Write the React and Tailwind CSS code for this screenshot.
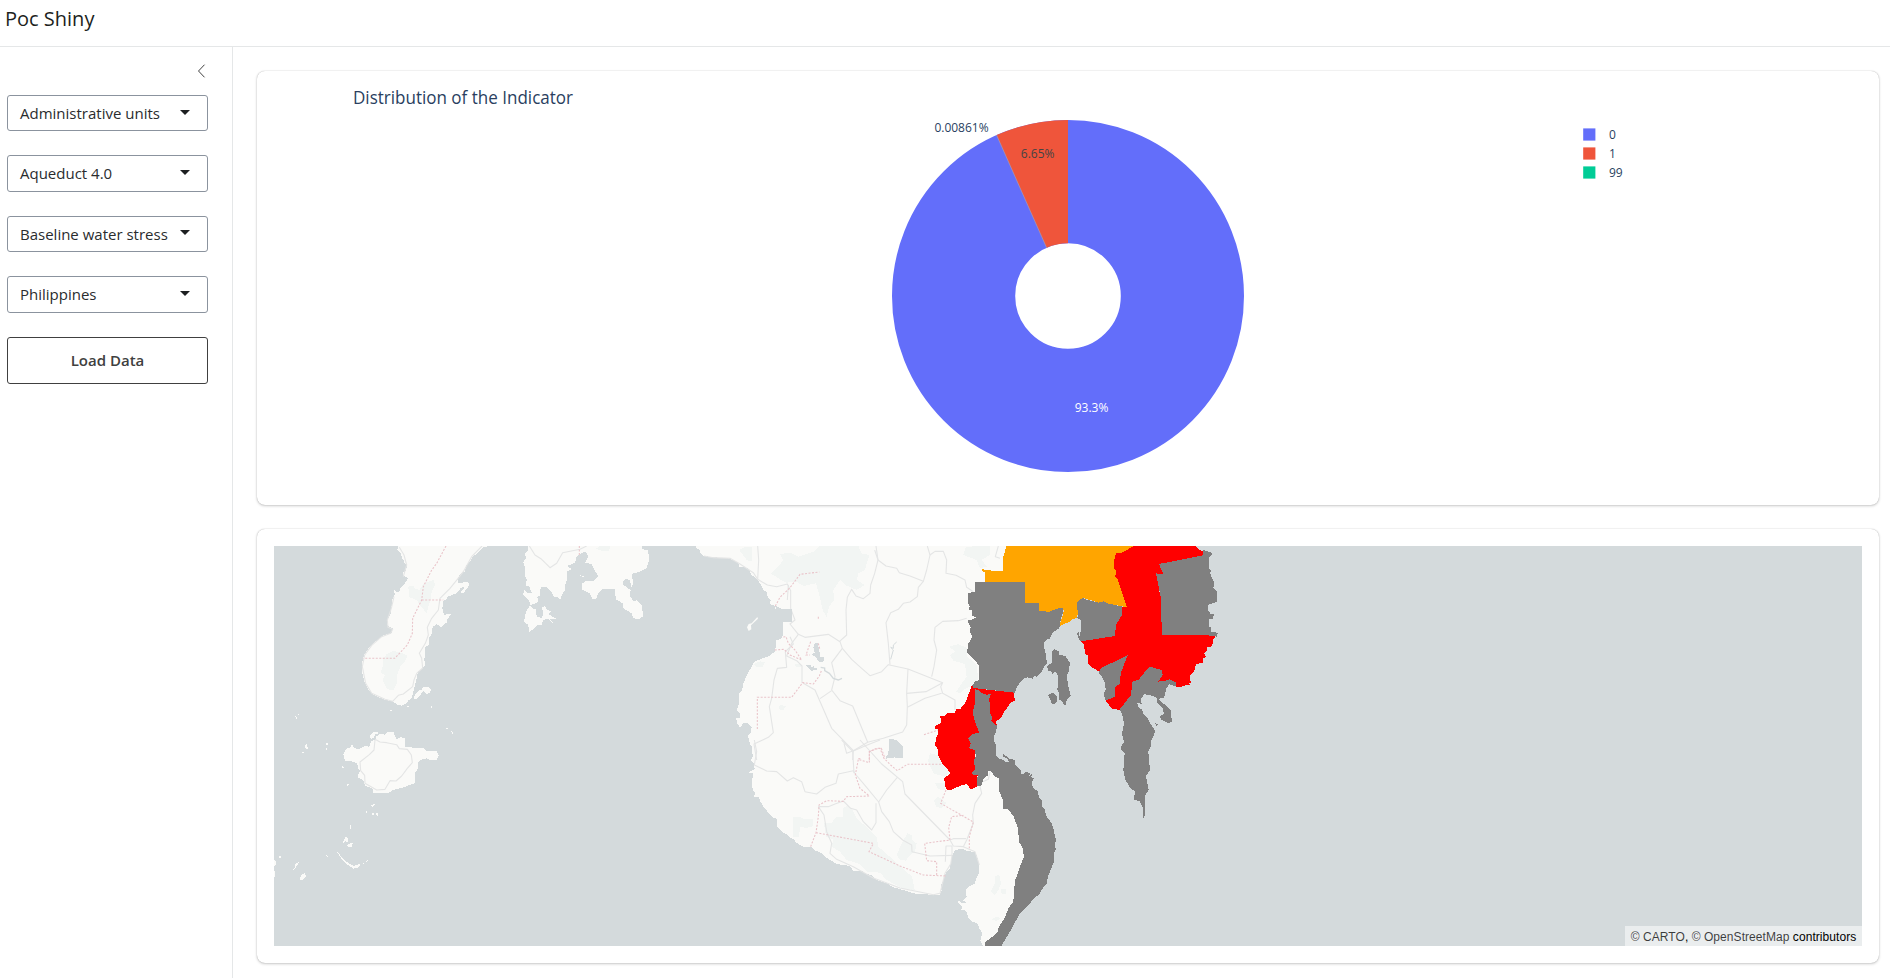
import React from "react";

const selects = ["Administrative units", "Aqueduct 4.0", "Baseline water stress", "Philippines"];

const LAND = "#fafaf8";
const WATER = "#d4dadc";
const PARK = "#f2f5f3";
const GRAY = "#808080";

// Three drawing units make one pixel; each tile has its own origin.
const tile = (x, y) => `translate(${x} ${y}) scale(0.333333)`;

const Fill = ({ c, p }) => p.map((d) => <polygon key={d} points={d} fill={c} shapeRendering="crispEdges" />);
const Roads = ({ p }) =>
  p.map((d) => <polyline key={d} points={d} fill="none" stroke="#e4e5e5" strokeWidth="3.3" strokeLinejoin="round" />);
const Borders = ({ p }) =>
  p.map((d) => <polyline key={d} points={d} fill="none" stroke="#e9c3c9" strokeWidth="3.2" strokeDasharray="6 4.5" />);

const westLand = [
  "385,18 382,30 392,38 396,54 402,62 404,72 411,76 408,92 398,98 402,108 414,114 410,122 405,130 392,142 388,154 380,158 372,150 374,162 372,170 366,178 368,192 362,205 364,215 358,230 350,240 350,255 368,265 365,280 340,285 333,292 315,305 295,325 282,345 276,370 277,400 285,430 295,450 310,465 345,480 370,485 380,493 395,497 412,488 414,482 425,474 430,455 436,432 442,405 445,394 458,385 467,376 463,362 466,322 478,312 476,296 486,280 488,260 500,253 515,262 522,252 532,248 532,238 543,222 522,224 517,205 520,182 530,178 532,170 560,160 572,144 585,140 572,158 580,160 598,136 594,125 565,130 562,118 572,100 585,94 588,78 602,64 606,52 622,40 640,22 660,18",
  "432,478 434,466 445,452 455,449 460,440 475,440 483,448 480,460 470,461 460,452 452,464 440,478",
  "740,18 775,18 775,30 765,40 768,54 760,66 766,86 764,108 770,118 768,136 778,140 785,158 774,160 762,150 760,164 776,180 782,195 792,192 804,186 802,170 810,166 812,140 830,140 846,158 852,170 862,170 870,180 878,160 886,150 885,135 892,115 890,95 905,88 892,78 905,72 915,68 920,50 935,40 945,34 955,48 945,68 966,72 970,84 985,110 970,122 950,122 935,132 937,150 960,160 966,176 978,178 985,160 998,146 1034,148 1038,178 1058,190 1060,205 1085,220 1090,234 1105,238 1120,228 1115,195 1100,180 1092,184 1080,170 1082,150 1060,135 1060,122 1070,116 1080,122 1085,142 1090,130 1085,102 1110,95 1130,85 1138,58 1134,30 1118,28 1115,18",
  "780,196 788,206 797,206 800,230 814,234 820,226 816,202 824,198 832,210 845,214 835,222 858,236 838,236 848,248 834,236 820,240 815,255 802,254 795,264 778,275 774,254 762,245 768,215",
  "930,106 948,112 940,112",
  "405,502 420,496 414,502",
  "358,510 368,511 362,514",
  "480,500 486,499 489,506",
  "75,528 80,530 80,537",
  "83,523 89,523 84,528",
  "528,565 537,563 532,567",
  "544,574 551,579 547,581",
];

const southWestLand = [
  "220,162 228,146 240,144 246,134 252,142 262,148 275,144 285,138 298,140 302,126 316,118 318,110 330,102 345,104 354,96 370,96 375,110 380,118 392,111 404,115 404,140 430,143 460,145 468,152 485,152 500,154 507,166 500,180 482,180 470,175 450,180 443,190 444,204 435,220 436,235 434,250 400,262 370,270 352,280 308,280 310,268 300,262 285,258 280,240 262,232 270,212 264,204 262,190 240,182 225,183",
  "298,108 308,98 322,94 324,100 315,104 312,114 303,117",
  "105,138 110,133 114,146 108,148",
  "168,128 174,128 174,136 169,136",
  "170,141 172,150 169,150",
  "97,156 102,157 98,159",
  "215,198 222,202 217,204",
  "231,252 237,254 232,258",
  "303,316 314,312 312,319 306,320",
  "288,330 291,335 289,339",
  "307,338 311,338 311,346 307,346",
  "318,338 323,340 323,347 319,346",
  "240,375 243,378 242,387 239,381",
  "219,425 226,412 232,411 234,424 228,428 226,420 222,430",
  "231,435 240,430 248,430 246,440 236,441",
  "202,457 210,464 214,472 236,490 250,497 262,496 267,491 271,494 262,504 250,506 232,494 214,476",
  "275,492 284,488 279,493",
  "288,485 297,478 291,485",
  "169,466 176,472 171,470",
  "25,467 32,467 32,473 27,476",
  "69,510 74,502 77,490 87,487 80,498 74,506",
  "12,480 18,485 18,496 12,498",
  "12,514 15,515 15,530 12,530",
  "90,532 97,523 104,520 108,528 97,542 90,540",
];

const mainLand =
  "50,18 48,24 58,28 60,38 72,48 100,52 140,54 165,62 175,72 178,80 195,82 208,88 214,105 226,112 235,122 242,134 250,150 260,156 264,174 272,182 268,192 285,198 285,207 300,212 318,206 332,208 336,240 326,247 310,247 310,285 302,297 288,302 288,318 284,335 268,348 240,358 222,366 216,380 204,398 190,430 186,452 178,460 178,490 170,510 180,520 180,534 168,535 172,550 180,564 190,550 205,550 215,562 213,578 202,588 208,600 215,608 216,626 222,634 225,660 900,660 900,450 1000,400 1000,18";
const southLand =
  "147,0 150,14 158,20 155,36 160,48 152,62 162,72 164,88 146,97 160,100 156,122 158,150 164,158 163,172 176,172 182,186 192,202 215,230 232,238 232,262 246,276 262,284 268,292 282,298 288,308 310,320 332,320 342,330 366,340 378,352 410,372 450,378 460,392 485,392 500,402 516,406 530,420 560,430 580,442 610,450 640,460 690,464 718,466 725,452 722,436 732,416 737,400 750,384 755,350 765,330 790,326 800,334 825,335 832,350 838,380 836,400 826,424 824,432 806,440 797,448 800,472 790,482 800,488 785,488 774,482 776,492 786,498 784,510 798,512 806,534 816,544 832,550 838,566 847,580 841,602 850,618 880,618 905,590 960,490 985,400 985,345 965,250 940,215 925,190 910,140 900,95 880,90 880,0";

const orange =
  "258,18 255,35 250,50 250,94 218,94 207,88 198,92 184,84 188,94 196,98 196,126 315,126 315,188 357,188 357,212 388,216 427,202 432,212 424,240 418,258 450,245 458,238 470,234 478,210 472,185 488,173 535,188 550,184 562,190 622,202 660,18";
const bigRed =
  "642,18 826,18 835,28 850,34 850,46 717,72 730,103 708,100 716,130 718,155 722,170 726,286 865,286 888,290 878,298 880,306 872,322 860,320 862,332 852,340 858,350 848,356 850,368 828,372 822,395 810,405 812,428 806,430 815,437 800,434 785,440 768,440 768,428 750,418 735,422 715,425 728,405 726,390 688,380 655,420 637,425 633,465 598,510 575,505 557,482 586,470 586,440 600,432 602,400 623,346 545,383 537,395 526,388 510,378 503,370 505,348 496,342 492,315 480,303 490,303 585,288 588,255 606,225 607,200 620,200 592,115 586,112 588,92 583,88 582,62 588,38 602,40";
const westRed =
  "155,438 160,440 175,446 284,458 281,466 286,482 272,488 262,503 252,515 246,530 228,545 231,557 220,552 200,600 165,625 165,700 173,704 170,740 152,748 140,732 124,736 92,750 78,748 72,714 92,700 78,682 68,674 56,650 52,622 44,618 50,590 55,582 54,566 46,566 47,554 60,553 64,540 58,528 75,528 82,518 104,518 108,508 120,508 136,488";
const grays = [
  "164,126 315,126 315,188 357,188 357,212 388,216 405,208 427,202 430,215 422,240 418,265 404,274 396,280 390,295 378,300 373,308 372,322 378,345 381,372 372,380 365,395 350,410 342,408 338,416 322,412 314,414 300,428 292,440 284,458 160,444 156,436 166,424 178,420 176,375 160,355 142,340 143,315 157,290 150,275 152,262 142,240 160,238 168,232 155,226 155,210 145,208 150,200 143,188 143,160 164,155",
  "488,173 495,178 535,188 550,184 562,190 607,200 606,225 588,255 585,288 490,303 480,303 474,292 471,280 477,276 480,298 484,240 472,235 475,218 471,205 472,185",
  "717,72 850,46 850,30 870,36 876,42 866,55 868,85 874,92 870,100 882,126 880,145 890,155 890,185 878,190 866,192 863,210 872,222 882,222 878,238 866,238 866,258 872,262 873,276 893,278 892,290 865,286 726,286 722,170 708,100 730,103",
  "537,395 545,383 623,346 602,400 600,432 586,440 586,470 557,482 550,462 557,450 555,430 545,410 538,402",
  "688,380 726,390 728,405 715,425 735,422 750,418 768,428 768,440 748,433 738,446 735,465 730,474 716,476 690,465 672,463 662,478 665,492 650,487 656,502 665,508 672,525 682,532 690,550 706,572 700,590 692,605 692,620 685,635 690,690 678,708 686,750 676,765 675,800 673,837 668,834 670,808 660,785 642,778 645,755 630,742 616,720 610,690 614,640 603,630 604,620 612,605 606,582 612,550 606,520 598,510 633,465 637,425 655,420",
  "712,474 720,482 732,492 752,512 756,545 745,549 725,540 720,530 732,520 728,506 712,488",
  "706,550 714,554 710,558",
  "396,334 404,328 416,334 418,344 436,348 452,372 446,380 448,392 440,405 445,440 452,468 440,480 437,496 428,490 427,482 416,480 416,458 412,450 415,425 412,402 405,394 398,404 392,392 384,392 381,378 396,368 397,352",
  "384,465 400,457 412,470 412,482 404,492 394,490 392,480",
  "165,447 178,452 183,458 200,464 213,462 208,474 210,520 216,530 214,544 231,557 228,578 221,588 222,602 228,614 228,648 238,656 252,660 257,668 266,665 262,656 250,650 250,641 266,655 284,660 286,676 302,690 305,704 318,696 330,700 328,708 336,702 334,712 343,714 336,724 338,744 352,752 358,772 366,782 366,800 374,808 378,826 386,838 395,850 400,866 405,888 408,900 404,918 408,928 402,940 402,965 394,985 384,1010 380,1030 364,1050 358,1062 340,1078 325,1095 300,1120 286,1145 270,1175 250,1208 245,1218 196,1218 196,1206 218,1190 234,1175 234,1165 256,1130 265,1105 280,1085 282,1050 286,1020 298,985 312,950 308,925 297,905 294,865 280,828 264,808 250,808 250,782 238,755 238,730 236,715 222,708 215,695 205,692 205,705 190,716 184,737 170,737 173,705 153,703 165,688 162,660 168,650 165,630 147,625 152,610 145,595 156,582 178,578 165,545 158,518 165,490",
];

function MapView() {
  return (
    <svg viewBox="274 546 1588 400" className="block h-[400px] w-full" style={{ background: WATER }}>
      <g transform={tile(270, 540)}>
        <Fill c={LAND} p={westLand} />
        <Fill c={PARK} p={[
          "415,140 430,138 435,146 448,150 462,130 490,120 496,135 485,155 482,180 475,200 470,220 450,195 440,180 418,172",
          "350,342 370,332 392,338 412,346 405,365 392,378 382,402 382,425 370,452 350,446 338,420 345,405 332,398 340,372 338,358",
          "978,26 990,18 1020,18 1018,32 1000,34",
        ]} />
        <Roads p={[
          "388,22 402,45 410,75 400,110",
          "372,170 364,205 352,240 354,262 368,268 362,280 335,290 305,316 284,345 277,380 287,430 305,460 345,478 368,484 385,466 400,462 428,440 432,420 440,400 458,384 455,355 448,340 466,310 475,285 472,262 485,235 505,210 510,175 540,145 562,118 580,95 605,50 636,18",
          "778,18 795,45 815,58 840,83 860,70 878,38 930,28 950,18",
        ]} />
        <Borders p={["528,18 500,70 484,92 460,140 455,180 428,235 427,280 412,315 374,355 280,355", "455,180 520,180", "928,18 928,45"]} />
      </g>
      <g transform={tile(270, 700)}>
        <Fill c={LAND} p={southWestLand} />
        <Roads p={["315,120 312,150 298,164 270,186 272,212 284,226 285,250 320,270 345,268 360,242 378,243 395,228 412,205 427,188 424,165 412,148 388,146 380,134 350,128 330,126 315,118"]} />
      </g>
      <g transform={tile(680, 540)}>
        <Fill c={LAND} p={[mainLand]} />
        <g transform="translate(60 600)">
          <Fill c={LAND} p={[southLand]} />
          <Fill c={PARK} p={[
            "280,232 300,230 312,238 340,236 340,258 320,264 300,260 297,292 280,290",
            "372,250 395,248 410,230 428,230 430,205 442,195 458,210 470,235 500,262 530,290 535,320 575,355 600,378 636,410 644,450 610,446 560,420 540,398 500,395 480,372 440,360 420,335 395,320 400,298 378,290",
            "590,345 605,310 622,280 635,285 636,300 650,310 645,335 630,345 618,362 598,358",
            "690,40 712,45 745,80 752,95 735,110 700,100 684,62",
            "705,130 735,130 735,150 715,148",
            "702,180 715,170 740,190 725,205 708,200",
            "872,455 885,430 885,408 898,405 903,430 895,450 885,466",
            "903,448 918,447 918,462 905,462",
            "876,538 890,530 902,535 890,543",
          ]} />
          <Fill c={WATER} p={["570,0 590,0 608,20 609,52 590,50 570,56 557,50 572,38 582,22"]} />
          <Roads p={[
            "163,0 170,35 163,75 200,93 230,95 262,123 280,113 305,125 315,155 350,162 375,142 408,130 415,102 460,92 466,102 498,140 536,186 560,150 592,112",
            "425,0 458,34 462,100", "458,34 500,16 540,0", "480,0 545,72 608,125 615,162 750,300",
            "536,186 545,215 568,245 580,275 608,300 635,315 636,335 690,348 756,346",
            "355,200 385,200 405,192 430,183 452,205 470,210 490,245 515,270 528,248 528,190",
            "355,200 372,225 380,275 395,310 390,340 410,358 460,380 520,414 600,444 700,464 720,460 735,400 752,372 756,346 756,318 738,318 736,365",
            "838,130 845,160 825,190 818,225 820,250 800,300 790,320 760,318 750,300 760,296 798,296",
            "790,320 825,335 838,375", "838,130 865,118 870,95",
          ]} />
          <Borders p={[
            "332,320 348,278 355,230 357,195 380,182 430,184 440,170 508,168 480,145 466,105 475,58 508,68 508,35 525,28 540,25 552,55 572,75 592,92 622,73 725,73",
            "348,278 520,310 507,335 600,378 670,405 737,408", "710,405 710,365 680,362 674,310 750,300 746,262 755,230 790,226",
            "738,150 722,190 820,246 808,290 808,325",
          ]} />
        </g>
        <Fill c={PARK} p={[
          "272,100 290,85 310,60 300,42 330,38 355,50 400,35 420,18 535,18 545,40 568,45 560,70 555,90 535,100 530,120 555,135 530,150 495,135 480,120 460,150 462,180 447,200 440,232 428,210 418,165 408,130 370,138 350,125 320,128 300,118",
          "178,30 195,20 215,22 217,65 200,60",
          "810,345 825,335 808,320 835,312 862,325 862,350 890,375 895,420 870,440 850,450 840,460 828,455 860,410 855,372 820,362",
          "850,45 858,20 930,18 930,45 905,60 920,80 900,85 890,60",
          "222,372 240,364 256,366 248,380 228,381",
          "342,374 360,372 364,380 350,381",
          "295,500 305,494 318,500 310,510 298,508",
        ]} />
        <Roads p={[
          "72,48 100,53 150,55 180,72 220,98 233,118 262,135 290,140 322,132 332,152 332,205 345,240 330,252 355,283 375,292 445,283 480,305 487,325 515,358 545,385 570,407 605,395 625,374 684,387 788,428",
          "233,18 236,60 233,118", "325,135 322,180",
          "588,18 594,60 584,100 572,135 570,160 550,176 528,168 515,148 502,172 498,210 500,285 478,305",
          "584,30 594,60 618,78 650,85 658,98 690,108 730,124 715,142 712,170 690,186 670,190 655,208 632,218 618,248 625,310 630,374",
          "742,18 750,45 740,90 730,124", "750,45 765,34 790,34 800,60 798,100 828,106 855,120 860,142 880,155",
          "860,235 835,242 788,244 765,262 762,300 770,330 762,380 755,410", "684,387 680,460 682,500 680,555 668,576 610,595 563,607 520,632 518,660",
          "680,460 738,455 788,428 782,440 788,460 825,480 825,510", "682,502 735,475 785,460",
          "487,325 455,368 465,410 455,450 480,482 518,498 563,607", "455,452 420,476", "370,430 405,450 455,565 520,632",
          "355,283 335,310 320,348 350,362 366,378 366,430", "330,290 340,312 316,335 320,382 292,385 282,420 275,475 268,500 280,578 265,592 222,612 230,660", "492,610 500,640 520,632",
          "955,18 946,50 960,55",
        ]} />
        <Borders p={[
          "286,198 300,172 330,143 360,103 418,96", "232,567 232,472 335,472 368,428 400,432 418,408 425,390",
          "284,330 312,328 330,345 365,360 345,330 325,310 318,290 305,292", "392,305 378,345 390,345", "415,230 415,236", "415,310 420,330",
          "732,584 775,570", "568,660 568,635 590,625 604,625 615,655", "535,656 545,656",
        ]} />
        <Fill c={WATER} p={[
          "394,344 404,338 400,322 405,308 412,308 418,332 420,350 432,352 430,368 415,364 406,350",
          "378,376 392,376 396,384 402,376 402,384 410,384 410,390 395,392 388,386",
          "628,598 640,596 650,608 668,630 669,655 640,652 618,656 625,640",
          "286,198 305,206 336,208 336,245 310,247 290,225",
        ]} />
        <polyline points="422,382 434,384 434,392 448,400 460,415 475,420 486,415" fill="none" stroke={WATER} strokeWidth="4" />
        <polyline points="650,306 640,315 640,325 632,322 640,330 632,358" fill="none" stroke={WATER} strokeWidth="3" />
        <polygon points="201,262 206,252 215,250 232,231 234,236 213,256 214,268 206,273" fill={LAND} />
      </g>
      <g transform={tile(920, 540)}>
        <Fill c="#ffa500" p={[orange]} />
        <Fill c="#ff0000" p={[bigRed, westRed]} />
        <Fill c={GRAY} p={grays} />
      </g>
    </svg>
  );
}

const legend = [
  { label: "0", color: "#636efa", y: 134.4 },
  { label: "1", color: "#ef553b", y: 153.4 },
  { label: "99", color: "#00cc96", y: 172.4 },
];

function DonutChart() {
  return (
    <svg
      viewBox="257 71 1622 434"
      className="block h-full w-full font-['Open_Sans','Noto_Sans',sans-serif] text-[12px]"
    >
      <text x="353" y="104" fontSize="18" textLength="220" lengthAdjust="spacingAndGlyphs" fill="#2a3f5f">
        Distribution of the Indicator
      </text>
      <circle cx="1068" cy="296" r="114.4" fill="none" stroke="#636efa" strokeWidth="123.2" />
      <path d="M1068 120 A176 176 0 0 0 996.6 135.1 L1046.6 247.7 A52.8 52.8 0 0 1 1068 243.2 Z" fill="#ef553b" />
      <path d="M996.6 135.1 L1046.6 247.7" stroke="#a9a6b8" strokeWidth="0.6" />
      <text x="961.5" y="131.5" textAnchor="middle" fill="#2a3f5f">0.00861%</text>
      <text x="1037.7" y="158" textAnchor="middle" fill="#444444">6.65%</text>
      <text x="1091.5" y="412" textAnchor="middle" fontWeight="500" fill="#ffffff">93.3%</text>
      {legend.map((l) => (
        <g key={l.label}>
          <rect x="1583.2" y={l.y - 6} width="12.2" height="12.2" fill={l.color} />
          <text x="1609" y={l.y + 4.4} fill="#2a3f5f">{l.label}</text>
        </g>
      ))}
    </svg>
  );
}

export default function App() {
  return (
    <div className="flex h-[978px] flex-col overflow-hidden bg-white font-['Open_Sans','Noto_Sans',sans-serif] text-[#1d1f21]">
      <header className="flex h-[47px] shrink-0 items-start border-b border-[#e5e7e8] pl-[5px] pt-1 text-[20px] leading-[30px]">
        Poc Shiny
      </header>
      <div className="flex min-h-0 flex-1">
        <aside className="flex w-[233px] shrink-0 flex-col border-r border-[#e5e7e8] pl-[7px] pr-6">
          <div className="flex h-12 justify-end pr-[2px] pt-[17px]">
            <svg width="9" height="14" viewBox="0 0 9 14" fill="none" stroke="#404040" strokeWidth="1">
              <path d="M7.5 .7 1.5 7l6 6.3" />
            </svg>
          </div>
          <div className="flex flex-col gap-6">
            {selects.map((s) => (
              <button
                key={s}
                className="flex h-[36.4px] items-center justify-between rounded-[3px] border border-[#8b939e] pl-3 pr-[17px] text-[15px] text-[#2a2c2e]"
              >
                <span>{s}</span>
                <span className="mb-[2px] h-0 w-0 border-x-[5px] border-t-[5px] border-x-transparent border-t-[#1d1f21]" />
              </button>
            ))}
            <button className="h-[47px] rounded-[3px] border border-[#404040] text-[15px] font-semibold text-[#404040]">
              Load Data
            </button>
          </div>
        </aside>
        <main className="flex flex-1 flex-col gap-6 pl-6 pr-[11px] pt-6">
          <section className="h-[434px] shrink-0 rounded-lg shadow-[0_0_1px_rgba(0,0,0,0.3),0_1px_3px_rgba(0,0,0,0.2)]">
            <DonutChart />
          </section>
          <section className="h-[434px] shrink-0 rounded-lg p-[17px] shadow-[0_0_1px_rgba(0,0,0,0.3),0_1px_3px_rgba(0,0,0,0.2)]">
            <div className="relative">
              <MapView />
              <div className="absolute bottom-0 right-0 flex h-5 w-[237px] items-center justify-center bg-white/50 pt-px font-['Liberation_Sans',sans-serif] text-[12px] tracking-[0.06px] text-black">
                <span className="whitespace-pre">
                  <span className="text-black/75">© CARTO</span>, <span className="text-black/75">© OpenStreetMap</span> contributors
                </span>
              </div>
            </div>
          </section>
        </main>
      </div>
    </div>
  );
}
